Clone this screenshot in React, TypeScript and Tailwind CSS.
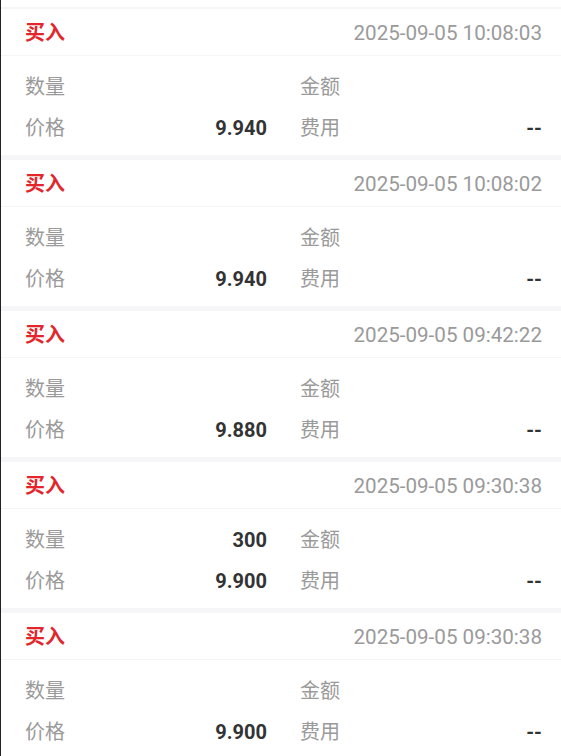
import React from 'react';

type Trade = {
  time: string;
  qty: string;
  price: string;
  amount: string;
  fee: string;
};

const trades: Trade[] = [
  { time: '2025-09-05 10:08:03', qty: '', price: '9.940', amount: '', fee: '--' },
  { time: '2025-09-05 10:08:02', qty: '', price: '9.940', amount: '', fee: '--' },
  { time: '2025-09-05 09:42:22', qty: '', price: '9.880', amount: '', fee: '--' },
  { time: '2025-09-05 09:30:38', qty: '300', price: '9.900', amount: '', fee: '--' },
  { time: '2025-09-05 09:30:38', qty: '', price: '9.900', amount: '', fee: '--' },
];

const Cell = ({ label, value }: { label: string; value: string }) => (
  <div className="flex items-center justify-between h-[41px]">
    <span className="text-[20px] text-[#9a9a9a]">{label}</span>
    <span className="text-[20px] font-bold text-[#333]">{value}</span>
  </div>
);

const App = () => {
  return (
    <div
      className="w-[561px] h-[756px] overflow-hidden bg-white border-l border-[#222]"
      style={{ fontFamily: 'Roboto, "Noto Sans CJK SC", sans-serif' }}
    >
      <div className="h-[7px] bg-white" />
      {trades.map((t, idx) => (
        <div key={idx}>
          <div className={idx === 0 ? 'h-[2px] bg-[#f6f6f8]' : 'h-[5px] bg-[#f6f6f8]'} />
          <div className="h-[47px] flex items-center justify-between pl-[24px] pr-[19px] pt-[2px] border-b border-[#f5f5f5]">
            <span className="text-[20px] font-semibold text-[#e2262c]">买入</span>
            <span className="text-[20.6px] text-[#9a9a9a]">{t.time}</span>
          </div>
          <div className="h-[99px] pt-[10px] pl-[24px] pr-[19px] grid grid-cols-2 gap-x-[33px] content-start">
            <Cell label="数量" value={t.qty} />
            <Cell label="金额" value={t.amount} />
            <Cell label="价格" value={t.price} />
            <Cell label="费用" value={t.fee} />
          </div>
        </div>
      ))}
    </div>
  );
};

export default App;
